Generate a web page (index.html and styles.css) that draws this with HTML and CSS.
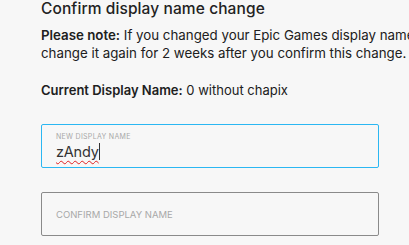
FILE: index.html
```html
<!DOCTYPE html>
<html lang="en">
<head>
  <meta charset="UTF-8" />
  <title>Confirm display name change</title>
  <link rel="stylesheet" href="styles.css">
</head>
<body>
  <main class="panel">
    <h2 class="title">Confirm display name change</h2>
    <p class="note"><strong>Please note:</strong> If you changed your Epic Games display name change it again for 2 weeks after you confirm this change.</p>
    <p class="current"><strong>Current Display Name:</strong> 0 without chapix</p>

    <label class="field active">
      <span class="label">New Display Name</span>
      <span class="value"><span class="typo">zAndy</span><span class="caret"></span></span>
    </label>

    <label class="field">
      <span class="placeholder">Confirm Display Name</span>
    </label>
  </main>
</body>
</html>
```

FILE: styles.css
```css
* {
  margin: 0;
  padding: 0;
  box-sizing: border-box;
}
html, body {
  background-color: #f7f7f7;
  overflow: hidden;
}
body {
  font-family: "Inter", "Liberation Sans", Arial, sans-serif;
  color: #202020;
  padding: 0 0 0 41px;
}
.panel {
  width: 368px;
}
.title {
  font-size: 15.5px;
  font-weight: 500;
  letter-spacing: 0.1px;
  line-height: 20px;
  margin-top: -1px;
  color: #222;
}
.note {
  font-size: 13.3px;
  line-height: 18px;
  margin-top: 7px;
  width: 390px;
}
.current {
  font-size: 13px;
  line-height: 18px;
  margin-top: 19px;
}
strong {
  font-weight: 600;
}
.field {
  display: flex;
  flex-direction: column;
  justify-content: center;
  width: 338px;
  height: 44px;
  border: 1px solid #8a8a8a;
  border-radius: 2px;
  padding: 0 14px;
  margin-top: 25px;
}
.field.active {
  border-color: #2bb7f2;
  justify-content: flex-start;
  padding-top: 7px;
}
.field + .field {
  margin-top: 24px;
}
.label {
  font-size: 7px;
  text-transform: uppercase;
  color: #a8a8a8;
  letter-spacing: 0.3px;
}
.value {
  display: flex;
  align-items: center;
  font-size: 14.5px;
  letter-spacing: -0.2px;
  color: #333;
  margin-top: 2px;
}
.typo {
  text-decoration: underline wavy #e02020;
  text-decoration-thickness: 1px;
  text-underline-offset: 3px;
}
.caret {
  width: 1px;
  height: 17px;
  background: #333;
}
.placeholder {
  font-size: 9.5px;
  text-transform: uppercase;
  color: #a8a8a8;
  letter-spacing: 0;
}
```
